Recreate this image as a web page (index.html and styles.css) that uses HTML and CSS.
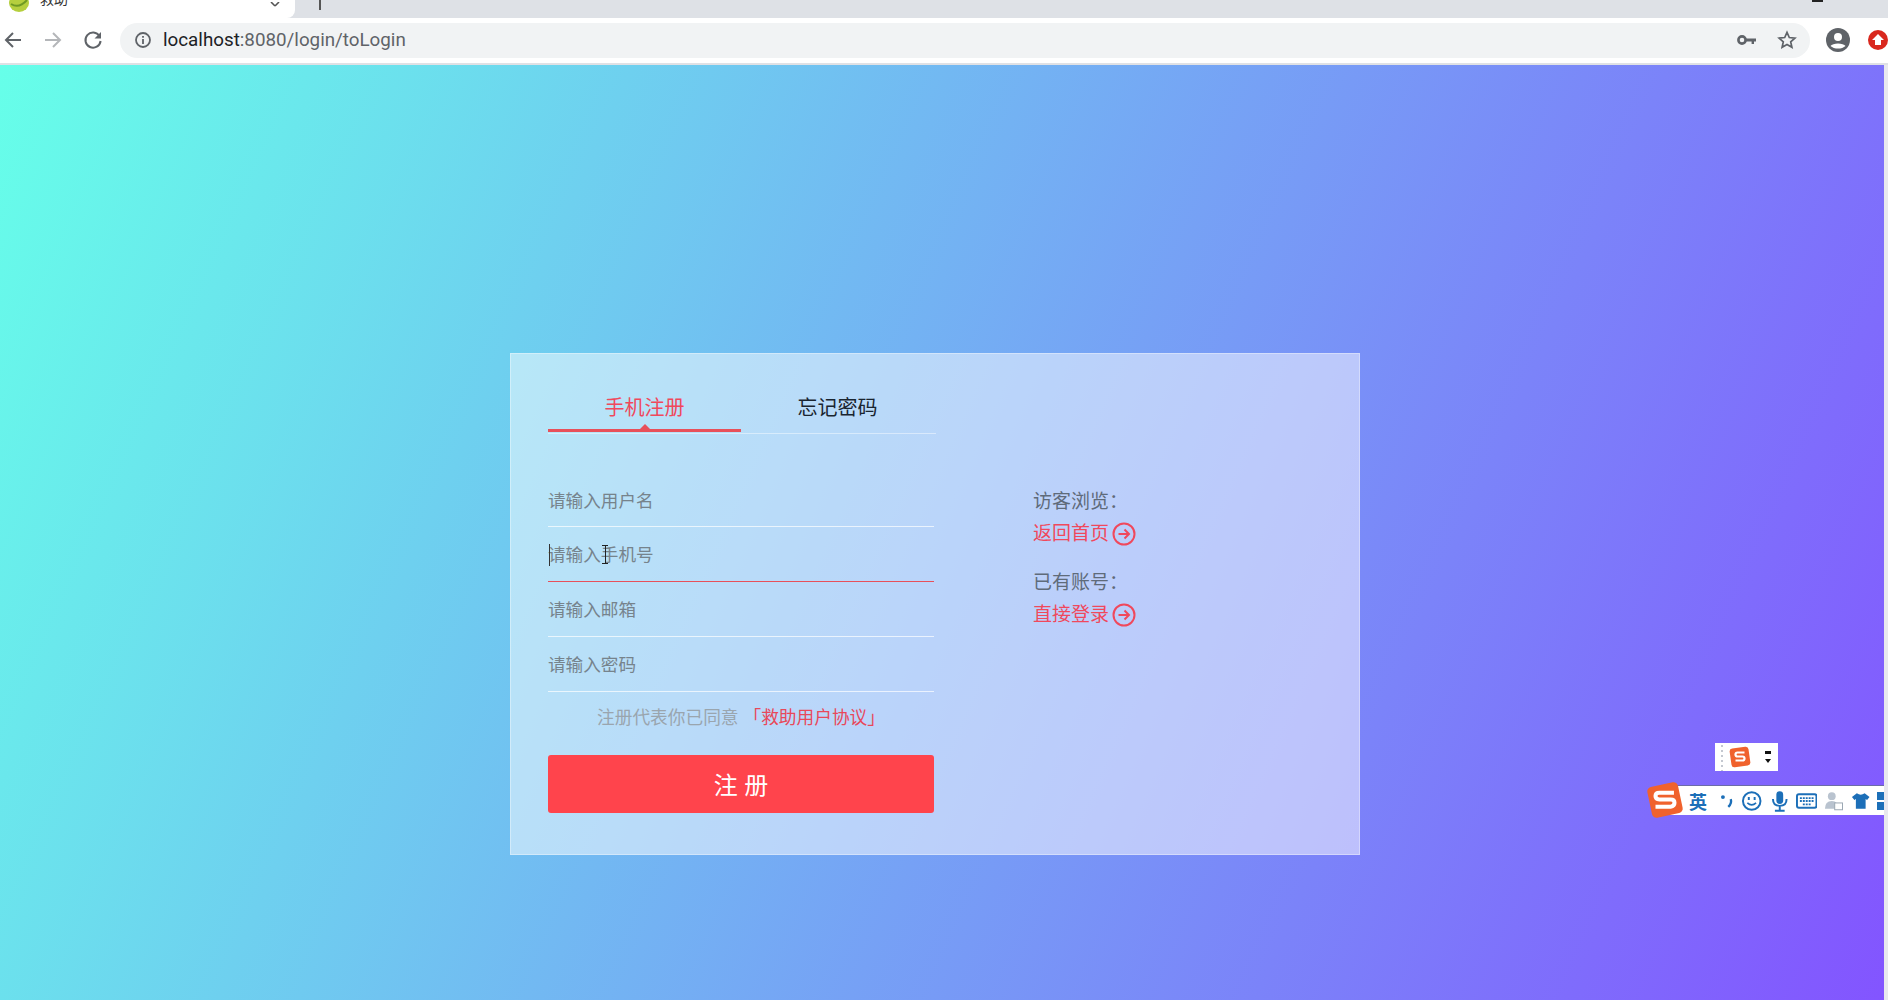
FILE: index.html
```html
<!DOCTYPE html>
<html lang="zh-CN">
<head>
    <meta charset="UTF-8">
    <meta name="viewport" content="width=device-width, initial-scale=1.0">
    <title>救助</title>
    <link rel="stylesheet" href="styles.css">
</head>
<body>
    <div class="tabstrip">
        <div class="tab-active">
            <svg class="favicon" width="22" height="18" viewBox="0 0 22 18"><ellipse cx="11" cy="3" rx="10" ry="9" fill="#b5cf3e"/><path d="M3 4q8 5 16-4" fill="none" stroke="#6f9a24" stroke-width="2"/></svg>
            <span class="tab-title">救助</span>
            <span class="tab-close">
                <svg width="12" height="6" viewBox="0 0 12 6"><path d="M1 0l4 4M9 0L5 4" stroke="#555" stroke-width="1.6"/></svg>
            </span>
        </div>
        <div class="tab-rest">
            <span class="tab-mark"></span>
            <span class="win-mark"></span>
        </div>
    </div>

    <div class="toolbar">
        <svg class="nav-icon" width="20" height="20" viewBox="0 0 20 20"><path d="M18 10H3M10 3l-7 7 7 7" fill="none" stroke="#5f6368" stroke-width="2"/></svg>
        <svg class="nav-icon" width="20" height="20" viewBox="0 0 20 20"><path d="M2 10h15M10 3l7 7-7 7" fill="none" stroke="#b4b6b9" stroke-width="2"/></svg>
        <svg class="nav-icon" width="20" height="20" viewBox="0 0 20 20"><path d="M16.5 6A7.6 7.6 0 1 0 17.6 11" fill="none" stroke="#5f6368" stroke-width="2"/><path d="M18 2v6.5h-6.5z" fill="#5f6368"/></svg>
        <div class="omnibox">
            <svg class="info-icon" width="18" height="18" viewBox="0 0 18 18"><circle cx="9" cy="9" r="7" fill="none" stroke="#5f6368" stroke-width="1.8"/><path d="M9 8v5M9 5v1.8" stroke="#5f6368" stroke-width="1.8"/></svg>
            <span class="url"><b>localhost</b>:8080/login/toLogin</span>
            <svg class="key-icon" width="20" height="12" viewBox="0 0 20 12"><circle cx="5" cy="6" r="3.6" fill="none" stroke="#5f6368" stroke-width="2.6"/><path d="M8 4.6h11v2.8h-2V10h-2.4V7.4H8z" fill="#5f6368"/></svg>
            <svg class="star-icon" width="20" height="20" viewBox="0 0 20 20"><path d="M10 2.4l2.3 5.1 5.6.6-4.2 3.7 1.2 5.5-4.9-2.8-4.9 2.8 1.2-5.5-4.2-3.7 5.6-.6z" fill="none" stroke="#5f6368" stroke-width="1.7"/></svg>
        </div>
        <svg class="avatar" width="24" height="24" viewBox="0 0 24 24"><circle cx="12" cy="12" r="12" fill="#5f6368"/><circle cx="12" cy="9" r="4" fill="#fff"/><path d="M4.5 18c2-3.4 13-3.4 15 0-3.5 3.4-11.500 3.400-15 0z" fill="#fff"/></svg>
        <svg class="ext" width="20" height="20" viewBox="0 0 20 20"><circle cx="10" cy="10" r="10" fill="#d9281e"/><path d="M10 4l6 6h-3v5H7v-5H4z" fill="#fff"/></svg>
    </div>

    <div class="page">
        <div class="card">
            <div class="card-left">
                <div class="tabs">
                    <div class="tab on">手机注册</div>
                    <div class="tab">忘记密码</div>
                </div>
                <form class="reg-form">
                    <div class="field">请输入用户名</div>
                    <div class="field focus"><i class="caret"></i>请输入手机号<i class="ibeam"></i></div>
                    <div class="field">请输入邮箱</div>
                    <div class="field">请输入密码</div>
                    <p class="terms">注册代表你已同意 <a>「救助用户协议」</a></p>
                    <div class="btn">注 册</div>
                </form>
            </div>
            <div class="card-right">
                <div class="side-group">
                    <p>访客浏览：</p>
                    <a>返回首页
                        <svg width="24" height="24" viewBox="0 0 24 24"><circle cx="12" cy="12" r="10.500" fill="none" stroke="#f0485c" stroke-width="2"/><path d="M6.500 12h10M12.500 7.500L17 12l-4.500 4.500" fill="none" stroke="#f0485c" stroke-width="2"/></svg>
                    </a>
                </div>
                <div class="side-group">
                    <p>已有账号：</p>
                    <a>直接登录
                        <svg width="24" height="24" viewBox="0 0 24 24"><circle cx="12" cy="12" r="10.500" fill="none" stroke="#f0485c" stroke-width="2"/><path d="M6.500 12h10M12.500 7.500L17 12l-4.500 4.500" fill="none" stroke="#f0485c" stroke-width="2"/></svg>
                    </a>
                </div>
            </div>
        </div>

        <!-- 输入法悬浮条 -->
        <div class="ime-mini">
            <span class="ime-dots"></span>
            <svg width="22" height="22" viewBox="0 0 22 22"><rect x="1.500" y="1.500" width="19" height="19" rx="3" transform="rotate(-8 11 11)" fill="#f0622d"/><path d="M15.500 6.500H8.500q-2 0-2 2t2 2h5q2 0 2 2t-2 2h-7" fill="none" stroke="#fff" stroke-width="2.200"/></svg>
            <span class="ime-arrows"><i></i><i></i></span>
        </div>
        <div class="ime-bar">
            <svg class="ime-logo" width="38" height="38" viewBox="0 0 34 34"><rect x="3" y="3" width="28" height="28" rx="4" transform="rotate(-12 17 17)" fill="#f0622d"/><path d="M25 10.500H12q-3.500 0-3.500 3t3.500 3h10q3.500 0 3.500 3t-3.500 3.500H8.500" fill="none" stroke="#fff" stroke-width="3.600"/></svg>
            <span class="ime-lang">英</span>
            <svg class="ime-punct" width="14" height="16" viewBox="0 0 14 16"><circle cx="3" cy="4" r="2" fill="#1c6fb8"/><path d="M11 6q1.500 4-2.500 8" fill="none" stroke="#1c6fb8" stroke-width="2.400"/></svg>
            <svg width="22" height="22" viewBox="0 0 22 22"><circle cx="11" cy="11" r="9" fill="none" stroke="#1c6fb8" stroke-width="2"/><path d="M8 7v3M14 7v3" stroke="#1c6fb8" stroke-width="2"/><path d="M6.500 13q4.500 4 9 0" fill="none" stroke="#1c6fb8" stroke-width="1.600"/></svg>
            <svg class="ime-mic" width="18" height="22" viewBox="0 0 18 22"><rect x="5.500" y="1" width="7" height="13" rx="3.500" fill="#1c6fb8"/><path d="M2 9q0 7 7 7t7-7M9 16v4M4 21h10" fill="none" stroke="#1c6fb8" stroke-width="2"/></svg>
            <svg width="22" height="16" viewBox="0 0 22 16"><rect x="1" y="1" width="20" height="14" rx="2" fill="none" stroke="#1c6fb8" stroke-width="2"/><path d="M4 5h14M4 8h14M7 11.500h8" stroke="#1c6fb8" stroke-width="1.800" stroke-dasharray="2 1"/></svg>
            <svg width="20" height="20" viewBox="0 0 20 20"><circle cx="8" cy="5" r="4" fill="#b9c3cf"/><path d="M1 18q0-8 7-8t6 8z" fill="#b9c3cf"/><rect x="11" y="12" width="8" height="7" fill="#fff" stroke="#9aa6b2"/></svg>
            <svg width="20" height="18" viewBox="0 0 20 18"><path d="M6 1L1 5l2.500 3L5 7v10h10V7l1.500 1L19 5l-5-4q-4 3-8 0z" fill="#1c6fb8"/></svg>
            <span class="ime-grid"><i></i><i></i></span>
        </div>
        <div class="scrollbar"></div>
    </div>
</body>
</html>
```
FILE: styles.css
```css
* {
    margin: 0;
    padding: 0;
    box-sizing: border-box;
}

html, body {
    height: 1000px;
    overflow: hidden;
}

body {
    font-family: "Liberation Sans", "Noto Sans CJK SC", sans-serif;
    background: #fff;
}

/* browser chrome */
.tabstrip {
    height: 18px;
    display: flex;
    background: #dee1e6;
}

.tab-active {
    width: 295px;
    background: #fff;
    display: flex;
    align-items: flex-start;
    padding-left: 8px;
    overflow: hidden;
    border-bottom-right-radius: 8px;
}

.favicon {
    flex: none;
}

.tab-title {
    margin-left: 10px;
    margin-top: -11px;
    font-size: 14px;
    line-height: 20px;
    color: #333;
}

.tab-close {
    margin-left: auto;
    margin-right: 13px;
    line-height: 6px;
}

.tab-rest {
    flex: 1;
    display: flex;
    justify-content: space-between;
    padding-left: 24px;
    padding-right: 65px;
    border-top-left-radius: 12px;
}

.tab-mark {
    width: 2px;
    height: 10px;
    background: #555;
}

.win-mark {
    width: 11px;
    height: 2px;
    background: #222;
}

.toolbar {
    height: 47px;
    display: flex;
    align-items: center;
    background: #fff;
    border-bottom: 2px solid #dfe1e5;
    padding: 0 0 1px 3px;
}

.nav-icon {
    flex: none;
    margin-right: 20px;
}

.nav-icon:nth-child(3) {
    margin-right: 14px;
}

.omnibox {
    flex: none;
    width: 1690px;
    height: 35px;
    margin-left: 3px;
    background: #f1f3f4;
    border-radius: 18px;
    display: flex;
    align-items: center;
    padding-left: 14px;
}

.url {
    margin-left: 11px;
    font-family: Roboto, "Liberation Sans", sans-serif;
    font-size: 18.800px;
    color: #5f6368;
}

.url b {
    font-weight: 400;
    color: #202124;
}

.key-icon {
    margin-left: auto;
}

.star-icon {
    margin-left: 20px;
    margin-right: 13px;
}

.avatar {
    flex: none;
    margin-left: 16px;
}

.ext {
    flex: none;
    margin-left: 18px;
}

/* page */
.page {
    position: relative;
    height: 935px;
    overflow: hidden;
    background: linear-gradient(114deg, #66ffe9 0%, #8354ff 100%);
    padding-top: 288px;
}

.card {
    width: 850px;
    height: 502px;
    margin-left: 510px;
    display: flex;
    background: rgba(255, 255, 255, 0.5);
    border: 1px solid rgba(255, 255, 255, 0.35);
    padding: 34px 37px;
}

.card-left {
    width: 386px;
}

.tabs {
    height: 46px;
    display: flex;
    margin-right: -2px;
    border-bottom: 1px solid rgba(255, 255, 255, 0.45);
    margin-bottom: 39px;
}

.tab {
    position: relative;
    width: 193px;
    height: 44px;
    text-align: center;
    font-size: 20px;
    line-height: 40px;
    color: #1a2530;
}

.tab.on {
    color: #f0485c;
    border-bottom: 3px solid #e8505a;
}

.tab.on::after {
    content: "";
    position: absolute;
    left: 92px;
    bottom: 0;
    border: 5px solid transparent;
    border-top: 0;
    border-bottom-color: #e8505a;
}

.field {
    position: relative;
    height: 55px;
    border-bottom: 1px solid rgba(255, 255, 255, 0.7);
    font-size: 17.600px;
    line-height: 56px;
    color: #76838c;
}

.field:first-child {
    height: 54px;
}

.field.focus {
    border-bottom-color: #e8505a;
}

.caret {
    position: absolute;
    left: 1px;
    top: 17px;
    width: 1px;
    height: 22px;
    background: #333;
}

.ibeam {
    position: absolute;
    left: 54px;
    top: 18px;
    width: 6px;
    height: 19px;
    border-top: 1px solid #222;
    border-bottom: 1px solid #222;
    background: linear-gradient(#222, #222) center / 1px 100% no-repeat;
}

.terms {
    height: 63px;
    padding-top: 12px;
    text-align: center;
    font-size: 17.700px;
    line-height: 28px;
    color: #9aa5ae;
}

.terms a {
    color: #e8485a;
}

.btn {
    height: 58px;
    background: #ff444c;
    border-radius: 3px;
    text-align: center;
    color: #fff;
    font-size: 24px;
    line-height: 62px;
}

.card-right {
    margin-left: 99px;
    padding-top: 98px;
}

.side-group {
    margin-bottom: 17px;
    font-size: 19px;
    line-height: 32px;
}

.side-group p {
    color: #5f6b7a;
}

.side-group a {
    display: flex;
    align-items: center;
    gap: 3px;
    color: #f0485c;
}

/* input method toolbars */
.ime-mini {
    position: absolute;
    left: 1715px;
    top: 678px;
    width: 63px;
    height: 28px;
    background: #fff;
    display: flex;
    align-items: center;
    padding-left: 14px;
}

.ime-dots {
    position: absolute;
    left: 6px;
    top: 2px;
    width: 2px;
    height: 26px;
    background: repeating-linear-gradient(#c4c8d0 0 2px, transparent 2px 5px);
}

.ime-arrows {
    margin-left: 14px;
    display: flex;
    flex-direction: column;
    gap: 5px;
}

.ime-arrows i {
    width: 6px;
    height: 3px;
    background: #111;
}

.ime-arrows i:last-child {
    height: 0;
    background: none;
    border: 3px solid transparent;
    border-bottom: 0;
    border-top: 4px solid #111;
}

.ime-bar {
    position: absolute;
    left: 1660px;
    top: 720px;
    width: 225px;
    height: 30px;
    background: #fff;
    border-top: 1px solid #6c6ca8;
    display: flex;
    align-items: center;
    gap: 7px;
    padding-left: 29px;
}

.ime-logo {
    position: absolute;
    left: -14px;
    top: -5px;
}

.ime-lang {
    font-size: 18px;
    font-weight: 700;
    color: #1c6fb8;
}

.ime-punct {
    margin-left: 6px;
}

.ime-mic {
    margin-left: 2px;
}

.ime-grid {
    display: flex;
    flex-direction: column;
    gap: 2px;
}

.ime-grid i {
    width: 8px;
    height: 8px;
    background: #1c6fb8;
}

.scrollbar {
    position: absolute;
    right: 0;
    top: 0;
    width: 4px;
    height: 100%;
    background: #e8e8ee;
}
```
